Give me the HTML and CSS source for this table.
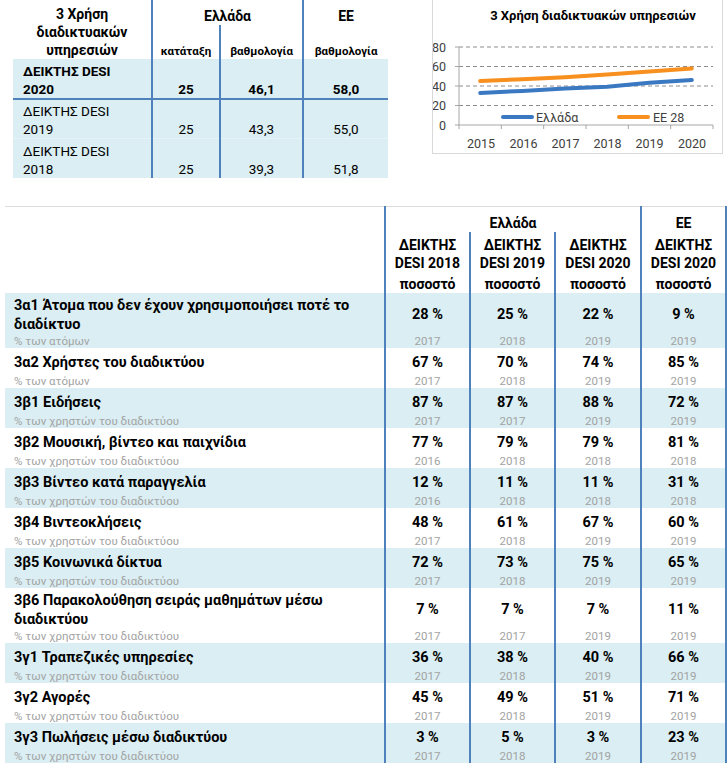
FILE: index.html
```html
<!DOCTYPE html>
<html lang="el">
<head>
<meta charset="utf-8">
<title>3 Χρήση διαδικτυακών υπηρεσιών</title>
<link rel="stylesheet" href="styles.css">
</head>
<body>
<div class="top">
  <table class="summary">
    <colgroup><col class="sc1"><col class="sc2"><col class="sc3"><col class="sc4"></colgroup>
    <tr class="h1">
      <th rowspan="2" class="hlbl">3 Χρήση<br>διαδικτυακών<br>υπηρεσιών</th>
      <th colspan="2" class="grp">Ελλάδα</th>
      <th class="grp eu">EE</th>
    </tr>
    <tr class="h2">
      <th class="sub">κατάταξη</th>
      <th class="sub mid">βαθμολογία</th>
      <th class="sub eu">βαθμολογία</th>
    </tr>
    <tr class="row cur">
      <td class="lbl">ΔΕΙΚΤΗΣ DESI<br>2020</td><td>25</td><td class="mid">46,1</td><td class="eu">58,0</td>
    </tr>
    <tr class="row r2">
      <td class="lbl">ΔΕΙΚΤΗΣ DESI<br>2019</td><td>25</td><td class="mid">43,3</td><td class="eu">55,0</td>
    </tr>
    <tr class="row r3">
      <td class="lbl">ΔΕΙΚΤΗΣ DESI<br>2018</td><td>25</td><td class="mid">39,3</td><td class="eu">51,8</td>
    </tr>
  </table>

  <div class="chart">
    <svg width="289" height="153" viewBox="0 0 289 153">
      <text class="ct" x="160" y="20" text-anchor="middle">3 Χρήση διαδικτυακών υπηρεσιών</text>
      <g class="grid">
        <line x1="26" y1="47" x2="280" y2="47"/>
        <line x1="26" y1="66.5" x2="280" y2="66.5"/>
        <line x1="26" y1="86" x2="280" y2="86"/>
        <line x1="26" y1="105.5" x2="280" y2="105.5"/>
      </g>
      <g class="axis">
        <line x1="26" y1="47" x2="26" y2="125"/>
        <line x1="26" y1="125" x2="280" y2="125"/>
        <line x1="22" y1="47" x2="26" y2="47"/>
        <line x1="22" y1="66.5" x2="26" y2="66.5"/>
        <line x1="22" y1="86" x2="26" y2="86"/>
        <line x1="22" y1="105.5" x2="26" y2="105.5"/>
        <line x1="22" y1="125" x2="26" y2="125"/>
        <line x1="26" y1="125" x2="26" y2="129"/>
        <line x1="68.3" y1="125" x2="68.3" y2="129"/>
        <line x1="110.7" y1="125" x2="110.7" y2="129"/>
        <line x1="153" y1="125" x2="153" y2="129"/>
        <line x1="195.3" y1="125" x2="195.3" y2="129"/>
        <line x1="237.7" y1="125" x2="237.7" y2="129"/>
        <line x1="280" y1="125" x2="280" y2="129"/>
      </g>
      <g class="yl" text-anchor="end">
        <text x="13" y="51.5">80</text>
        <text x="13" y="71">60</text>
        <text x="13" y="90.5">40</text>
        <text x="13" y="110">20</text>
        <text x="13" y="129.5">0</text>
      </g>
      <g class="xl" text-anchor="middle">
        <text x="48" y="147.5">2015</text>
        <text x="90.5" y="147.5">2016</text>
        <text x="132.5" y="147.5">2017</text>
        <text x="174.5" y="147.5">2018</text>
        <text x="216.5" y="147.5">2019</text>
        <text x="259" y="147.5">2020</text>
      </g>
      <polyline class="l-gr" points="47.2,93 89.5,90.9 131.8,88.5 174.2,86.7 216.5,82.8 258.8,80.1"/>
      <polyline class="l-eu" points="47.2,81.1 89.5,79.2 131.8,77.2 174.2,74.5 216.5,71.4 258.8,68.4"/>
      <line class="l-gr" x1="70" y1="117" x2="99" y2="117"/>
      <text class="lg" x="103" y="121.5">Ελλάδα</text>
      <line class="l-eu" x1="186" y1="117" x2="215" y2="117"/>
      <text class="lg" x="220" y="121.5">EE 28</text>
    </svg>
  </div>
</div>

<table class="desi">
  <colgroup><col class="dc1"><col class="dcv"><col class="dcv"><col class="dcv4"><col class="dcv"></colgroup>
  <thead>
    <tr class="ha">
      <th rowspan="3" class="blank"></th>
      <th colspan="3" class="v">Ελλάδα</th>
      <th class="v last">EE</th>
    </tr>
    <tr class="hb">
      <th class="v">ΔΕΙΚΤΗΣ<br>DESI 2018</th>
      <th class="v">ΔΕΙΚΤΗΣ<br>DESI 2019</th>
      <th class="v">ΔΕΙΚΤΗΣ<br>DESI 2020</th>
      <th class="v last">ΔΕΙΚΤΗΣ<br>DESI 2020</th>
    </tr>
    <tr class="hc">
      <th class="v">ποσοστό</th>
      <th class="v">ποσοστό</th>
      <th class="v">ποσοστό</th>
      <th class="v last">ποσοστό</th>
    </tr>
  </thead>
  <tbody class="s">
    <tr class="main"><td class="t">3α1 Άτομα που δεν έχουν χρησιμοποιήσει ποτέ το<br>διαδίκτυο</td><td class="v">28 %</td><td class="v">25 %</td><td class="v">22 %</td><td class="v last">9 %</td></tr>
    <tr class="note"><td class="n">% των ατόμων</td><td class="v">2017</td><td class="v">2018</td><td class="v">2019</td><td class="v last">2019</td></tr>
  </tbody>
  <tbody>
    <tr class="main"><td class="t">3α2 Χρήστες του διαδικτύου</td><td class="v">67 %</td><td class="v">70 %</td><td class="v">74 %</td><td class="v last">85 %</td></tr>
    <tr class="note"><td class="n">% των ατόμων</td><td class="v">2017</td><td class="v">2018</td><td class="v">2019</td><td class="v last">2019</td></tr>
  </tbody>
  <tbody class="s">
    <tr class="main"><td class="t">3β1 Ειδήσεις</td><td class="v">87 %</td><td class="v">87 %</td><td class="v">88 %</td><td class="v last">72 %</td></tr>
    <tr class="note"><td class="n">% των χρηστών του διαδικτύου</td><td class="v">2017</td><td class="v">2017</td><td class="v">2019</td><td class="v last">2019</td></tr>
  </tbody>
  <tbody>
    <tr class="main"><td class="t">3β2 Μουσική, βίντεο και παιχνίδια</td><td class="v">77 %</td><td class="v">79 %</td><td class="v">79 %</td><td class="v last">81 %</td></tr>
    <tr class="note"><td class="n">% των χρηστών του διαδικτύου</td><td class="v">2016</td><td class="v">2018</td><td class="v">2018</td><td class="v last">2018</td></tr>
  </tbody>
  <tbody class="s">
    <tr class="main"><td class="t">3β3 Βίντεο κατά παραγγελία</td><td class="v">12 %</td><td class="v">11 %</td><td class="v">11 %</td><td class="v last">31 %</td></tr>
    <tr class="note"><td class="n">% των χρηστών του διαδικτύου</td><td class="v">2016</td><td class="v">2018</td><td class="v">2018</td><td class="v last">2018</td></tr>
  </tbody>
  <tbody>
    <tr class="main"><td class="t">3β4 Βιντεοκλήσεις</td><td class="v">48 %</td><td class="v">61 %</td><td class="v">67 %</td><td class="v last">60 %</td></tr>
    <tr class="note"><td class="n">% των χρηστών του διαδικτύου</td><td class="v">2017</td><td class="v">2018</td><td class="v">2019</td><td class="v last">2019</td></tr>
  </tbody>
  <tbody class="s">
    <tr class="main"><td class="t">3β5 Κοινωνικά δίκτυα</td><td class="v">72 %</td><td class="v">73 %</td><td class="v">75 %</td><td class="v last">65 %</td></tr>
    <tr class="note"><td class="n">% των χρηστών του διαδικτύου</td><td class="v">2017</td><td class="v">2018</td><td class="v">2019</td><td class="v last">2019</td></tr>
  </tbody>
  <tbody>
    <tr class="main"><td class="t">3β6 Παρακολούθηση σειράς μαθημάτων μέσω<br>διαδικτύου</td><td class="v">7 %</td><td class="v">7 %</td><td class="v">7 %</td><td class="v last">11 %</td></tr>
    <tr class="note"><td class="n">% των χρηστών του διαδικτύου</td><td class="v">2017</td><td class="v">2017</td><td class="v">2019</td><td class="v last">2019</td></tr>
  </tbody>
  <tbody class="s">
    <tr class="main"><td class="t">3γ1 Τραπεζικές υπηρεσίες</td><td class="v">36 %</td><td class="v">38 %</td><td class="v">40 %</td><td class="v last">66 %</td></tr>
    <tr class="note"><td class="n">% των χρηστών του διαδικτύου</td><td class="v">2017</td><td class="v">2018</td><td class="v">2019</td><td class="v last">2019</td></tr>
  </tbody>
  <tbody>
    <tr class="main"><td class="t">3γ2 Αγορές</td><td class="v">45 %</td><td class="v">49 %</td><td class="v">51 %</td><td class="v last">71 %</td></tr>
    <tr class="note"><td class="n">% των χρηστών του διαδικτύου</td><td class="v">2017</td><td class="v">2018</td><td class="v">2019</td><td class="v last">2019</td></tr>
  </tbody>
  <tbody class="s">
    <tr class="main"><td class="t">3γ3 Πωλήσεις μέσω διαδικτύου</td><td class="v">3 %</td><td class="v">5 %</td><td class="v">3 %</td><td class="v last">23 %</td></tr>
    <tr class="note"><td class="n">% των χρηστών του διαδικτύου</td><td class="v">2017</td><td class="v">2018</td><td class="v">2019</td><td class="v last">2019</td></tr>
  </tbody>
</table>
</body>
</html>
```

FILE: styles.css
```css
* { box-sizing: border-box; }

html, body {
  margin: 0;
  padding: 0;
  background: #fff;
}

body {
  width: 728px;
  font-family: Roboto, "Noto Sans", "DejaVu Sans", sans-serif;
  color: #000;
}

/* ---------- top section ---------- */
.top {
  display: flex;
  align-items: flex-start;
  height: 206px;
}

.summary {
  margin-left: 13px;
  width: 375px;
  table-layout: fixed;
  border-collapse: collapse;
  font-size: 13px;
}
.sc1 { width: 139px; }
.sc2 { width: 68px; }
.sc3 { width: 83px; }
.sc4 { width: 85px; }

.summary th,
.summary td {
  padding: 0;
  text-align: center;
  vertical-align: bottom;
  line-height: 18px;
  white-space: nowrap;
}
.summary th { font-weight: 700; }

.summary .h1 { height: 25px; }
.summary .h2 { height: 34px; }
.summary .row { height: 40px; background: #daeef3; }
.summary .r2 { height: 39px; }

.summary .hlbl {
  font-size: 14px;
  border-right: 2px solid #4f81bd;
}
.summary .grp { font-size: 14px; }
.summary .eu { border-left: 2px solid #4f81bd; }
.summary .mid { border-left: 2px solid #4f81bd; }
.summary .sub { font-size: 11.5px; line-height: 14px; padding-bottom: 1px; }

.summary .lbl {
  text-align: left;
  padding-left: 10px;
  border-right: 2px solid #4f81bd;
}
.summary td { font-size: 13.5px; }
.summary .cur td { font-weight: 700; border-bottom: 2px solid #4f81bd; }
.summary .r2 td { border-bottom: 1px solid #e6f3f7; }

.chart {
  margin-left: 44px;
  width: 291px;
  height: 154px;
  border: 1px solid #d9d9d9;
  border-top: none;
}
.chart svg { display: block; }
.chart .ct {
  font-family: Roboto, "Noto Sans", sans-serif;
  font-weight: 700;
  font-size: 13px;
  fill: #000;
}
.chart .grid line {
  stroke: #8c8c8c;
  stroke-width: 1;
  stroke-dasharray: 4 3;
}
.chart .axis line {
  stroke: #a6a6a6;
  stroke-width: 1;
}
.chart .yl text,
.chart .xl text,
.chart .lg {
  font-family: Roboto, "Noto Sans", sans-serif;
  font-size: 12.5px;
  fill: #404040;
}
.chart .l-gr,
.chart .l-eu {
  fill: none;
  stroke-width: 4;
  stroke-linecap: round;
  stroke-linejoin: round;
}
.chart .l-gr { stroke: #3a78c2; }
.chart .l-eu { stroke: #f7901e; }

/* ---------- DESI table ---------- */
.desi {
  margin-left: 5px;
  width: 721px;
  table-layout: fixed;
  border-collapse: collapse;
  border-top: 1px solid #dcdcdc;
}
.dc1 { width: 380px; }
.dcv { width: 85px; }
.dcv4 { width: 86px; }

.desi th,
.desi td {
  padding: 0;
  white-space: nowrap;
}
.desi .v {
  text-align: center;
  border-left: 2px solid #4f81bd;
}
.desi .last { border-right: 2px solid #4f81bd; }

.desi thead th {
  font-size: 14px;
  font-weight: 700;
  line-height: 18px;
  vertical-align: bottom;
}
.desi .ha { height: 25px; }
.desi .ha th { padding-bottom: 0; }
.desi .hb { height: 41px; }
.desi .hb th { padding-bottom: 1px; }
.desi .hc { height: 20px; }
.desi .hc th { padding-bottom: 0; }

.desi tbody.s { background: #daeef3; }

.desi .main { height: 26px; }
.desi .main td {
  padding-top: 3px;
  font-size: 14.5px;
  font-weight: 700;
  line-height: 19px;
  vertical-align: middle;
}
.desi .main .t {
  padding-left: 9px;
}

.desi .note { height: 14px; }
.desi .note td {
  line-height: 14px;
  color: #a3a3a3;
  vertical-align: middle;
}
.desi .note .n {
  padding-left: 9px;
  font-size: 11.5px;
}
.desi .note .v { font-size: 11.5px; }
```
